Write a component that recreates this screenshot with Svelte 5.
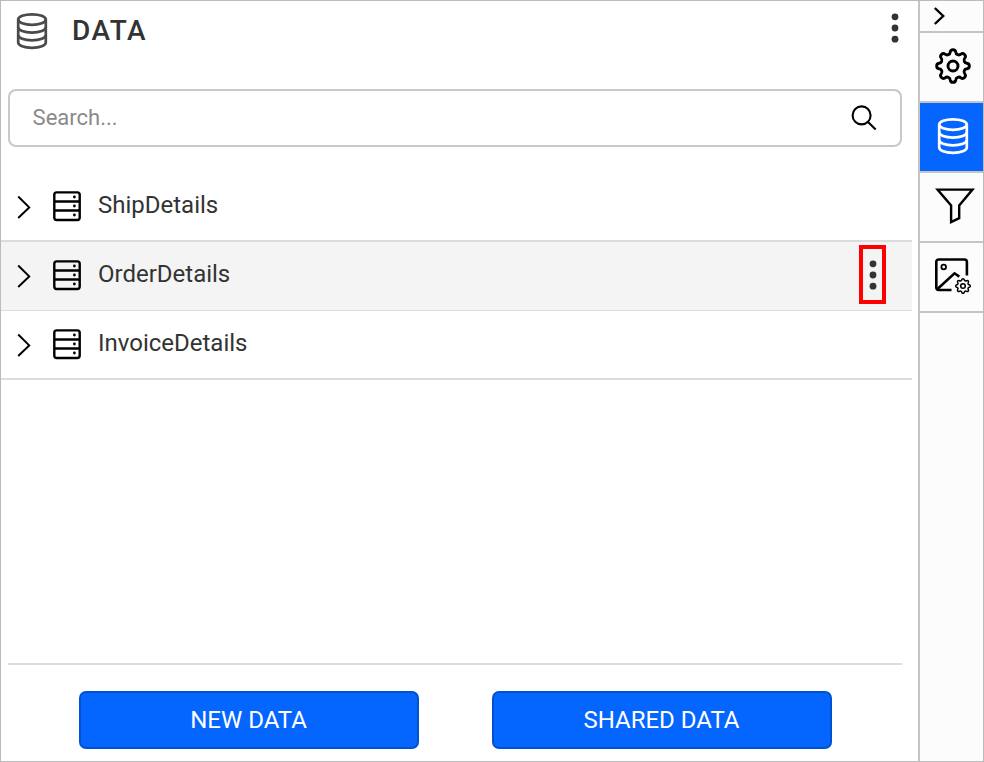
<script>
  const rows = [
    { name: 'ShipDetails', active: false },
    { name: 'OrderDetails', active: true },
    { name: 'InvoiceDetails', active: false }
  ];

  // Eight-tooth gear outline built from alternating convex and concave arcs.
  function gear(cx, cy, r, tooth, valley) {
    let d = '';
    for (let i = 0; i <= 16; i++) {
      const a = ((i * 22.5 - 101.25) * Math.PI) / 180;
      const x = (cx + r * Math.cos(a)).toFixed(2);
      const y = (cy + r * Math.sin(a)).toFixed(2);
      if (i === 0) d = `M${x} ${y}`;
      else if (i % 2) d += `A${tooth} ${tooth} 0 0 1 ${x} ${y}`;
      else d += `A${valley} ${valley} 0 0 0 ${x} ${y}`;
    }
    return d + 'Z';
  }
</script>

{#snippet database()}
  <svg width="34" height="38" viewBox="0 0 34 38" fill="none" stroke="currentColor" stroke-width="2.7">
    <ellipse cx="17" cy="7.6" rx="13.8" ry="5.3" />
    <path d="M3.2 7.6V30.6C3.2 33.6 9 35.8 17 35.8S30.8 33.6 30.8 30.6V7.6" />
    <path d="M3.2 15.2C3.2 18.2 9 20.6 17 20.6S30.8 18.2 30.8 15.2M3.2 22.9C3.2 25.9 9 28.3 17 28.3S30.8 25.9 30.8 22.9" />
  </svg>
{/snippet}

{#snippet dots()}
  <svg width="8" height="30" viewBox="0 0 8 30" fill="#333">
    <circle cx="4" cy="3.8" r="3.4" /><circle cx="4" cy="15" r="3.4" /><circle cx="4" cy="26.2" r="3.4" />
  </svg>
{/snippet}

<div class="app">
  <main>
    <header>
      <span class="title-icon">{@render database()}</span>
      <h1>DATA</h1>
      <span class="menu">{@render dots()}</span>
    </header>

    <div class="search">
      <span>Search...</span>
      <svg width="26" height="26" viewBox="0 0 26 26" fill="none" stroke="#000" stroke-width="2.1">
        <circle cx="10.6" cy="10.4" r="9" /><path d="M17 16.9L24.7 24.4" />
      </svg>
    </div>

    <div class="list">
      {#each rows as row}
        <div class="row" class:active={row.active}>
          <svg class="chevron" width="14" height="24" viewBox="0 0 14 24" fill="none" stroke="#000" stroke-width="2">
            <path d="M1.2 1.5L12.2 12.4L1.2 23" />
          </svg>
          <svg class="table" width="28" height="31" viewBox="0 0 28 31" fill="none" stroke="#000" stroke-width="2.4">
            <rect x="1.3" y="1.4" width="25.4" height="27.6" rx="2.4" />
            <path d="M1.3 10.5H26.7M1.3 19.5H26.7" />
            <g fill="#000" stroke="none">
              <circle cx="21.4" cy="6" r="1.4" /><circle cx="21.4" cy="15" r="1.4" /><circle cx="21.4" cy="24" r="1.4" />
            </g>
          </svg>
          <span class="name">{row.name}</span>
          {#if row.active}
            <span class="marked">{@render dots()}</span>
          {/if}
        </div>
      {/each}
    </div>

    <footer>
      <button>NEW DATA</button>
      <button>SHARED DATA</button>
    </footer>
  </main>

  <aside>
    <div class="collapse">
      <svg width="14" height="20" viewBox="0 0 14 20" fill="none" stroke="#000" stroke-width="2.4">
        <path d="M1.8 2L10.2 10L1.8 18" />
      </svg>
    </div>
    <div class="tab">
      <svg width="38" height="38" viewBox="0 0 38 38" fill="none" stroke="#000" stroke-width="2.9">
        <path d={gear(19, 19, 14.2, 2.8, 3.1)} /><circle cx="19" cy="19" r="5" />
      </svg>
    </div>
    <div class="tab selected">{@render database()}</div>
    <div class="tab">
      <svg class="filter" width="40" height="38" viewBox="0 0 40 38" fill="none" stroke="#000" stroke-width="2.4">
        <path d="M2.5 2.6H37.5L24.2 18.4V31.2L16.1 35V18.4Z" />
      </svg>
    </div>
    <div class="tab">
      <svg class="image" width="38" height="38" viewBox="0 0 38 38" fill="none" stroke="#000" stroke-width="2.6">
        <path d="M17.5 33H4.8Q2.3 33 2.3 30.5V5Q2.3 2.5 4.8 2.5H30.4Q32.9 2.5 32.9 5V18.6" />
        <path d="M3.5 32L20.5 16.3L25.3 19.6" />
        <circle cx="9.7" cy="10" r="2.3" stroke-width="1.8" />
        <path d={gear(29, 29, 6.4, 1.27, 1.4)} stroke-width="1.5" />
        <circle cx="29" cy="29" r="2.3" stroke-width="1.5" />
      </svg>
    </div>
  </aside>
</div>

<style>
  .app {
    box-sizing: border-box;
    width: 984px;
    height: 762px;
    display: flex;
    border: 1px solid #bbb;
    background: #fff;
    color: #333;
    font-family: Roboto, sans-serif;
    font-size: 24px;
  }
  svg { display: block; flex: none; }
  main { flex: 1; display: flex; flex-direction: column; }
  header {
    height: 88px;
    box-sizing: border-box;
    padding: 11px 19px 0 14px;
    display: flex;
    align-items: flex-start;
  }
  .title-icon { color: #4a4a4a; }
  h1 {
    margin: 1px 0 0 23px;
    font-size: 28px;
    line-height: 36px;
    font-weight: 500;
    letter-spacing: 1.5px;
    flex: 1;
  }
  .menu { margin-top: 1px; }
  .search {
    box-sizing: border-box;
    height: 58px;
    margin: 0 16px 0 7px;
    padding: 0 23px 2px 22.6px;
    border: 2px solid #c8c8c8;
    border-radius: 8px;
    display: flex;
    align-items: center;
    justify-content: space-between;
    font-size: 22px;
    color: #8a8a8a;
  }
  .search svg { margin-top: 2px; }
  .list { margin: 25px 6px 0 0; }
  .row {
    box-sizing: border-box;
    height: 70px;
    padding: 0 26px 0 16px;
    border-bottom: 2px solid #dcdcdc;
    display: flex;
    align-items: center;
  }
  .row.active {
    height: 69px;
    padding-bottom: 2px;
    border-bottom-width: 1px;
    background: #f4f4f4;
  }
  .row:last-child { height: 69px; padding-bottom: 1px; }
  .chevron { margin-top: 2px; }
  .table { margin-left: 22px; }
  .name { margin-left: 17px; flex: 1; padding-bottom: 2px; }
  .marked {
    box-sizing: border-box;
    width: 27px;
    height: 59px;
    margin-bottom: 1px;
    border: 4px solid #f00;
    display: flex;
    align-items: center;
    justify-content: center;
  }
  footer {
    box-sizing: border-box;
    margin: auto 16px 0 7px;
    height: 98px;
    padding: 26px 0 0 71px;
    border-top: 2px solid #dcdcdc;
    display: flex;
    gap: 73px;
  }
  button {
    width: 340px;
    height: 58px;
    padding: 0 1px 0 0;
    border: 2px solid #0052d3;
    border-radius: 7px;
    background: #0565ff;
    color: #fff;
    font: inherit;
  }
  aside {
    box-sizing: border-box;
    width: 65px;
    border-left: 2px solid #c5c5c5;
    background: #fcfcfc;
  }
  .collapse, .tab {
    box-sizing: border-box;
    border-bottom: 2px solid #c5c5c5;
    display: flex;
    align-items: center;
  }
  .collapse { height: 32px; padding-left: 13px; }
  .tab { height: 70px; justify-content: center; padding: 0 0 2px 3px; }
  .selected { background: #0565ff; color: #fff; }
  .filter { margin-left: 3px; }
</style>
